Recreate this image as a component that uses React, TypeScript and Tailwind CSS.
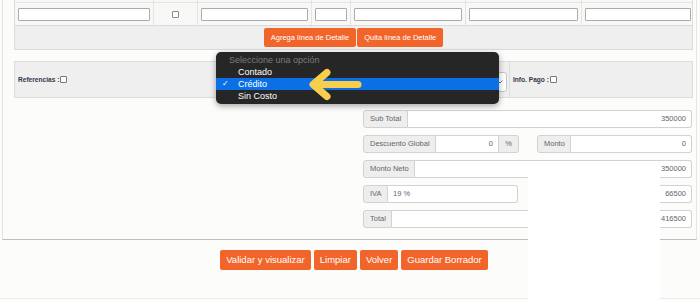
import React from "react";

const cols = [139, 44, 114, 39, 115, 116, 112];

function TableRow() {
  return (
    <div className="grid grid-cols-[139px_44px_114px_39px_115px_116px_112px] h-[22px] bg-[#f8f8f7]">
      {cols.map((w, i) => (
        <div
          key={i}
          className="flex items-center justify-center border-r border-[#e4e4e4] last:border-r-0 px-[3px]"
        >
          {i === 1 ? (
            <span className="block w-[7px] h-[7px] border border-[#8a8a8a] rounded-[1px] bg-white" />
          ) : (
            <span className="block w-full h-[13px] bg-white border border-[#ababab] rounded-[1px]" />
          )}
        </div>
      ))}
    </div>
  );
}

function Addon({ children, className = "" }: { children: React.ReactNode; className?: string }) {
  return (
    <div
      className={`h-full flex items-center px-[6px] bg-[#eeeeee] border border-[#d2d2d2] text-[7.5px] text-[#666] whitespace-nowrap ${className}`}
    >
      {children}
    </div>
  );
}

function Field({ children, className = "", left = false }: { children?: React.ReactNode; className?: string; left?: boolean }) {
  return (
    <div
      className={`h-full flex items-center px-[5px] bg-white border border-l-0 border-[#d2d2d2] text-[7.5px] text-[#666] ${left ? "justify-start" : "justify-end"} ${className}`}
    >
      {children}
    </div>
  );
}

export default function App() {
  return (
    <div className="relative w-[700px] h-[300px] overflow-hidden bg-[#fcfcfb] font-['Liberation_Sans',Arial,sans-serif]">
      {/* main form panel */}
      <div className="ml-[2px] w-[695px] h-[240px] border-l border-r border-b border-l-[#e2e2e2] border-r-[#e6e6e6] border-b-[#bdbdbd] pl-[11px] overflow-hidden">
        <div className="w-[679px] border-x border-[#dcdcdc] -mt-[20px]">
          <div className="border-b border-[#e4e4e4]">
            <TableRow />
          </div>
          <TableRow />
          <div className="h-[25px] bg-[#efefef] border-t border-b border-[#dadada] flex justify-center items-start pt-[2px] gap-[1px]">
            <button className="h-[19px] px-[7px] rounded-[2px] bg-[#f2652a] text-white text-[7.5px]">
              Agrega línea de Detalle
            </button>
            <button className="h-[19px] px-[7px] rounded-[2px] bg-[#f2652a] text-white text-[7.5px]">
              Quita línea de Detalle
            </button>
          </div>
        </div>

        {/* referencias / forma de pago */}
        <div className="mt-[11px] w-[679px] h-[37px] bg-[#efefef] border border-[#dcdcdc] flex items-stretch">
          <div className="w-[205px] flex items-center pl-[3px] gap-[1px] text-[6.6px] font-bold text-[#2f3a4c]">
            Referencias :
            <span className="block w-[7px] h-[7px] border border-[#777] rounded-[1px] bg-white" />
          </div>
          <div className="flex items-center pt-[4px]">
            <div className="w-[287px] h-[20px] bg-white border border-[#c4c4c4] rounded-[3px] flex items-center justify-end pr-[3px]">
              <svg width="6" height="4" viewBox="0 0 6 4">
                <path d="M0.5 0.5 L3 3 L5.5 0.5" fill="none" stroke="#666" strokeWidth="0.9" />
              </svg>
            </div>
          </div>
          <div className="ml-[2px] flex-1 border-l border-[#dcdcdc] flex items-center pl-[3px] gap-[1px] text-[6.6px] font-bold text-[#2f3a4c]">
            Info. Pago :
            <span className="block w-[7px] h-[7px] border border-[#777] rounded-[1px] bg-white" />
          </div>
        </div>

        {/* totales */}
        <div className="mt-[12px] ml-[349px] w-[329px] flex flex-col gap-[7px]">
          <div className="h-[18px] flex">
            <Addon className="w-[45px] rounded-l-[3px]">Sub Total</Addon>
            <Field className="flex-1 rounded-r-[3px]">350000</Field>
          </div>
          <div className="h-[18px] flex">
            <Addon className="w-[73px] rounded-l-[3px]">Descuento Global</Addon>
            <Field className="w-[63px]">0</Field>
            <Addon className="w-[20px] border-l-0 rounded-r-[3px] justify-center px-0">%</Addon>
            <Addon className="ml-[18px] w-[34px] rounded-l-[3px]">Monto</Addon>
            <Field className="flex-1 rounded-r-[3px]">0</Field>
          </div>
          <div className="h-[18px] flex">
            <Addon className="w-[52px] rounded-l-[3px]">Monto Neto</Addon>
            <Field className="flex-1 rounded-r-[3px]">350000</Field>
          </div>
          <div className="h-[18px] flex">
            <Addon className="w-[25px] rounded-l-[3px]">IVA</Addon>
            <Field left className="w-[130px] rounded-r-[3px]">19 %</Field>
            <Field className="ml-[10px] flex-1 border-l rounded-[3px]">66500</Field>
          </div>
          <div className="h-[18px] flex">
            <Addon className="w-[29px] rounded-l-[3px]">Total</Addon>
            <Field className="flex-1 rounded-r-[3px]">416500</Field>
          </div>
        </div>
      </div>

      {/* acciones */}
      <div className="mt-[10px] flex justify-center gap-[3px] pl-[8px]">
        {["Validar y visualizar", "Limpiar", "Volver", "Guardar Borrador"].map((t) => (
          <button key={t} className="h-[20px] px-[6px] rounded-[2px] bg-[#f2652a] text-white text-[9.5px]">
            {t}
          </button>
        ))}
      </div>
      <div className="mt-[28px] h-px bg-[#ececec]" />

      {/* blank patch over the capture */}
      <div className="absolute left-[528px] top-[170px] w-[132px] h-[130px] bg-white" />

      {/* native select menu */}
      <div className="absolute left-[216px] top-[52px] w-[283px] py-[2px] bg-[#262626] rounded-[5px] shadow-[0_2px_6px_rgba(0,0,0,0.35)] text-[9px] leading-[12px]">
        <div className="h-[12px] pl-[13px] text-[#7b7b7b]">Seleccione una opción</div>
        <div className="h-[12px] pl-[22px] text-white">Contado</div>
        <div className="h-[12px] flex items-center bg-[#0b6fe6] text-white">
          <span className="w-[22px] pl-[6px] text-[8px]">✓</span>
          Crédito
        </div>
        <div className="h-[12px] pl-[22px] text-white">Sin Costo</div>
      </div>

      {/* yellow pointer */}
      <svg className="absolute left-[305px] top-[68px]" width="60" height="34" viewBox="0 0 60 34">
        <path d="M11 16.5 H53" stroke="#f8cf4a" strokeWidth="7" strokeLinecap="round" />
        <path d="M22 4.5 L8 16.5 L22 28.5" fill="none" stroke="#f8cf4a" strokeWidth="7" strokeLinecap="round" strokeLinejoin="round" />
      </svg>
    </div>
  );
}
